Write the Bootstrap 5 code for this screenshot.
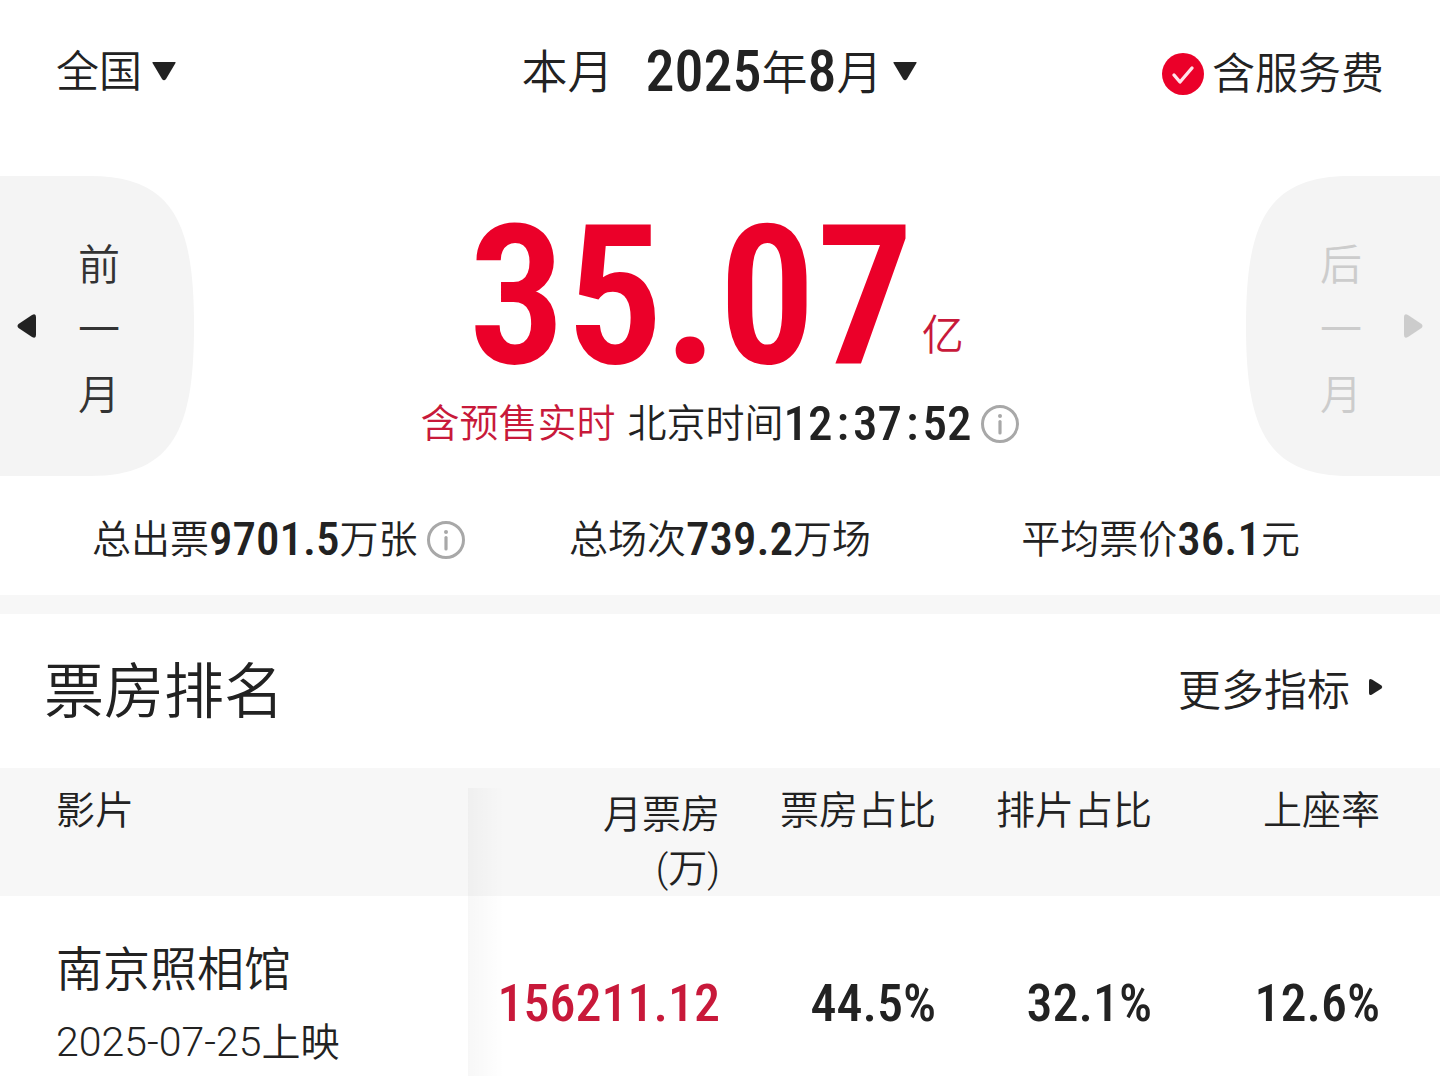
<!DOCTYPE html>
<html lang="zh-CN">
<head>
<meta charset="utf-8">
<meta name="viewport" content="width=device-width, initial-scale=1">
<title>票房排名</title>
<link rel="stylesheet" href="https://cdn.jsdelivr.net/npm/bootstrap@5.3.0/dist/css/bootstrap.min.css">
<style>
  :root { --ink: #222; --brand: #eb0029; --brand-text: #c8193a; --band: #f7f7f7; }
  body { font-family: Roboto, "Noto Sans CJK SC", sans-serif; font-weight: 350; color: var(--ink); background: #fff; }
  button, select { color: inherit; font: inherit; }
  .num { font-family: "Roboto Condensed", Roboto, sans-serif; font-weight: 500; }
  .plain-btn { background: none; border: 0; padding: 0; color: inherit; }

  /* top filter bar */
  .filter-bar { height: 144px; padding: 0 56px; }
  .filter-side { flex: 1 1 0; font-size: 43px; line-height: 60px; }
  .fee-side { padding-top: 4px; }
  .region-select { appearance: none; border: 0; background: none; padding: 0; width: 86px; font-size: 43px; line-height: 60px; }
  .month-btn { font-size: 46px; line-height: 60px; }
  .month-btn .num { font-size: 58px; vertical-align: -2px; line-height: 1; }
  .fee-check.form-check-input { width: 42px; height: 42px; margin: 0; border: 0; border-radius: 50%; background-color: var(--brand); background-size: 100%;
    background-image: url("data:image/svg+xml,%3Csvg xmlns='http://www.w3.org/2000/svg' viewBox='0 0 42 42'%3E%3Cpath d='M12 22l6 7 12-14' fill='none' stroke='%23ffe3ea' stroke-width='3.4' stroke-linecap='round' stroke-linejoin='round'/%3E%3C/svg%3E"); }

  /* hero */
  .hero-row { margin-top: 32px; height: 300px; }
  .hero-total { padding-bottom: 22px; }
  .step-btn { width: 194px; font-size: 42px; line-height: 65px; color: #333; }
  .step-btn:disabled { color: #ccc; }
  .step-shape { position: absolute; inset: 0; width: 100%; height: 100%; }
  .step-label { width: 42px; padding-top: 8px; white-space: normal; }
  .total-row { padding-right: 8px; }
  .total-num { font-size: 194px; line-height: 194px; font-weight: 600; color: var(--brand); }
  .total-unit { font-size: 42px; line-height: 60px; padding-bottom: 28px; color: var(--brand-text); }
  .time-row { font-size: 39px; line-height: 60px; }
  .time-row .num { font-size: 49px; }
  .live-tag { margin-right: 12px; }
  .clock { gap: 4px; }
  .brand-text { color: var(--brand-text); }

  .stat-row { height: 119px; padding: 8px 92px 0; font-size: 39px; line-height: 60px; }
  .stat-row .num { font-size: 47px; vertical-align: -2px; line-height: 1; }
  .divider { height: 19px; background: var(--band); }

  .title-bar { height: 154px; padding: 0 56px 0 44px; }
  .title-bar h1 { font-size: 60px; line-height: 80px; font-weight: inherit; }
  .more-link { font-size: 43px; line-height: 60px; color: inherit; text-decoration: none; }

  /* ranking table */
  .rank-table { table-layout: fixed; width: 100%; }
  .rank-table th { height: 128px; padding: 20px 0 0; background: var(--band); font-size: 39px; line-height: 46px; font-weight: inherit; vertical-align: top; text-align: right; }
  .rank-table th.two-line { line-height: 54px; }
  .rank-table th:first-child, .rank-table td:first-child { text-align: left; padding-left: 56px; }
  .rank-table th:last-child, .rank-table td:last-child { padding-right: 60px; }
  .rank-table td { padding: 36px 0 0; height: 180px; vertical-align: top; text-align: right; }
  .rank-table td.num { font-size: 52px; line-height: 64px; padding-top: 76px; }
  .film-name { font-size: 47px; line-height: 76px; }
  .film-date { font-size: 39px; line-height: 68px; }
  .film-date time { font-size: 41px; font-weight: 300; }
  .scroll-shade { position: absolute; left: 32.5%; top: 20px; bottom: 0; width: 36px; background: linear-gradient(90deg, rgba(0,0,0,.03), rgba(0,0,0,0)); }
</style>
</head>
<body>
<header class="filter-bar d-flex align-items-center text-nowrap">
  <div class="filter-side d-flex align-items-center gap-2">
    <select class="region-select" aria-label="地区"><option>全国</option></select>
    <svg width="28" height="24" viewBox="0 0 28 24" aria-hidden="true"><path d="M3 2h22q1 0 .5 1L16 19q-2 2.500-4 0L2.500 3Q2 2 3 2z" fill="#222"/></svg>
  </div>
  <button type="button" class="plain-btn month-btn d-flex align-items-center">
    <span class="me-4 pe-2">本月</span><span><span class="num">2025</span>年<span class="num">8</span>月</span>
    <svg class="ms-2" width="28" height="24" viewBox="0 0 28 24" aria-hidden="true"><path d="M3 2h22q1 0 .5 1L16 19q-2 2.500-4 0L2.500 3Q2 2 3 2z" fill="#222"/></svg>
  </button>
  <div class="filter-side fee-side d-flex align-items-center justify-content-end gap-2">
    <input class="form-check-input fee-check" type="checkbox" id="fee" checked>
    <label for="fee">含服务费</label>
  </div>
</header>

<main>
  <section class="hero-row d-flex justify-content-between text-nowrap">
    <button type="button" class="plain-btn step-btn position-relative">
      <svg class="step-shape" viewBox="0 0 194 300" preserveAspectRatio="none" aria-hidden="true"><path d="M0 0H90C175 0 194 50 194 150S175 300 90 300H0z" fill="#f4f4f4"/></svg>
      <span class="position-relative d-flex align-items-center">
        <svg class="ms-3 me-4" width="22" height="26" viewBox="0 0 22 26" aria-hidden="true"><path d="M2.500 11L16 2q4-2 4 2v18q0 4-4 2L2.500 15q-2-2 0-4z" fill="#222"/></svg>
        <span class="step-label ms-3">前一月</span>
      </span>
    </button>
    <div class="hero-total d-flex flex-column align-items-center justify-content-end">
      <div class="total-row d-flex align-items-end">
        <span class="num total-num">35.07</span><span class="total-unit ms-2">亿</span>
      </div>
      <div class="time-row d-flex align-items-center">
        <span class="brand-text live-tag">含预售实时</span>
        <span>北京时间</span>
        <span class="clock num d-flex"><span>12</span><span>:</span><span>37</span><span>:</span><span>52</span></span>
        <button type="button" class="plain-btn d-flex ms-2" aria-label="时间说明"><svg width="40" height="40" viewBox="0 0 40 40" aria-hidden="true"><circle cx="20" cy="20" r="17.500" fill="none" stroke="#a8a8a8" stroke-width="3"/><path d="M20 17.500V29" stroke="#a8a8a8" stroke-width="3.200" stroke-linecap="round"/><circle cx="20" cy="12" r="2" fill="#a8a8a8"/></svg></button>
      </div>
    </div>
    <button type="button" class="plain-btn step-btn position-relative" disabled>
      <svg class="step-shape" viewBox="0 0 194 300" preserveAspectRatio="none" aria-hidden="true"><path d="M194 0H104C19 0 0 50 0 150S19 300 104 300H194z" fill="#f4f4f4"/></svg>
      <span class="position-relative d-flex align-items-center justify-content-end">
        <span class="step-label me-3">后一月</span>
        <svg class="ms-4 me-3" width="22" height="26" viewBox="0 0 22 26" aria-hidden="true"><path d="M19.500 11L6 2Q2 0 2 4v18q0 4 4 2l13.500-9q2-2 0-4z" fill="#ccc"/></svg>
      </span>
    </button>
  </section>

  <section class="stat-row d-flex align-items-center text-nowrap">
    <div class="col-4 d-flex align-items-center"><span>总出票<span class="num">9701.5</span>万张</span>
      <button type="button" class="plain-btn d-flex ms-2" aria-label="出票说明"><svg width="40" height="40" viewBox="0 0 40 40" aria-hidden="true"><circle cx="20" cy="20" r="17.500" fill="none" stroke="#a8a8a8" stroke-width="3"/><path d="M20 17.500V29" stroke="#a8a8a8" stroke-width="3.200" stroke-linecap="round"/><circle cx="20" cy="12" r="2" fill="#a8a8a8"/></svg></button>
    </div>
    <div class="col-4 text-center">总场次<span class="num">739.2</span>万场</div>
    <div class="col-4 text-end pe-5">平均票价<span class="num">36.1</span>元</div>
  </section>
  <div class="divider"></div>

  <section>
    <div class="title-bar d-flex align-items-center justify-content-between text-nowrap">
      <h1 class="m-0 pt-1">票房排名</h1>
      <a href="#metrics" class="more-link d-flex align-items-center">更多指标
        <svg class="ms-3 mb-2" width="18" height="20" viewBox="0 0 18 20" aria-hidden="true"><path d="M15.500 8.500L6 2.500Q3 1 3 4v12q0 3 3 1.500l9.500-6q1.500-1.500 0-3z" fill="#222"/></svg></a>
    </div>
    <div class="position-relative" id="metrics">
      <table class="rank-table text-nowrap">
        <colgroup><col style="width:32.5%"><col style="width:17.5%"><col style="width:15%"><col style="width:15%"><col style="width:20%"></colgroup>
        <thead><tr><th scope="col">影片</th><th scope="col" class="two-line">月票房<br>(万)</th><th scope="col">票房占比</th><th scope="col">排片占比</th><th scope="col">上座率</th></tr></thead>
        <tbody><tr>
          <td><div class="film-name">南京照相馆</div><div class="film-date"><time datetime="2025-07-25">2025-07-25</time>上映</div></td>
          <td class="num brand-text">156211.12</td><td class="num">44.5%</td><td class="num">32.1%</td><td class="num">12.6%</td>
        </tr></tbody>
      </table>
      <div class="scroll-shade"></div>
    </div>
  </section>
</main>
<script src="https://cdn.jsdelivr.net/npm/bootstrap@5.3.0/dist/js/bootstrap.bundle.min.js"></script>
</body>
</html>
